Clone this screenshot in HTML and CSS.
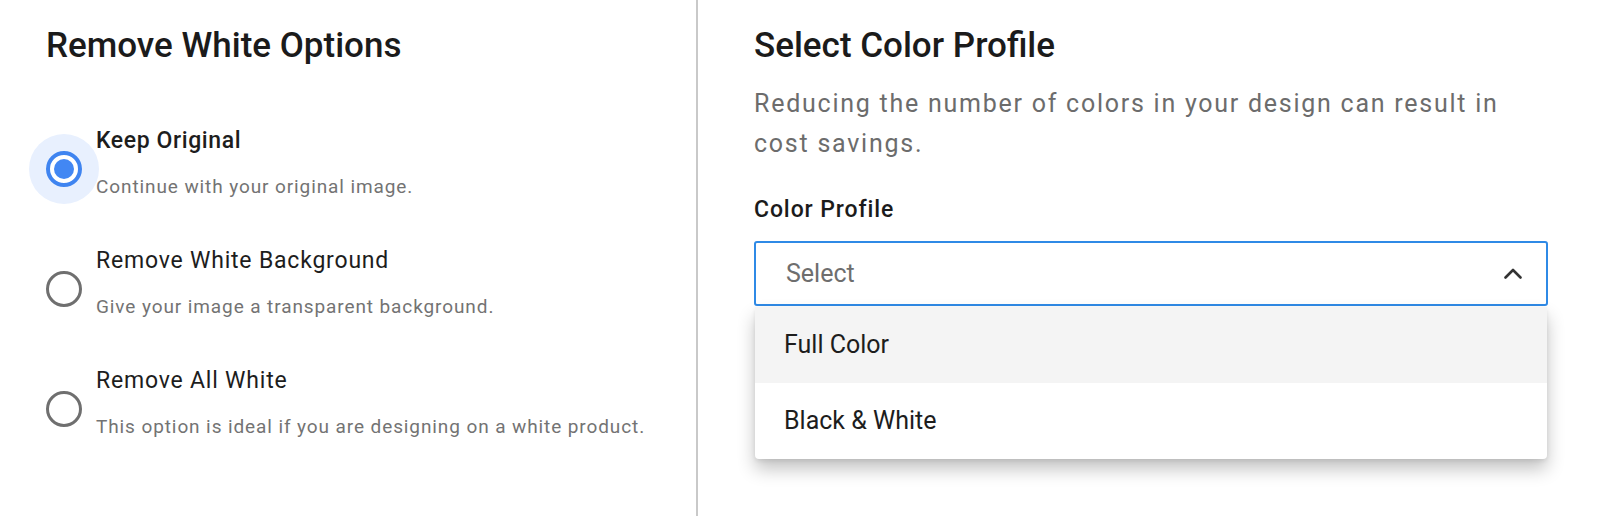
FILE: index.html
```html
<!DOCTYPE html>
<html lang="en">
<head>
<meta charset="utf-8">
<title>Options</title>
<link rel="stylesheet" href="styles.css">
</head>
<body>
<div class="page">
  <section class="panel panel-left">
    <h2 class="heading">Remove White Options</h2>
    <div class="options">
      <label class="option">
        <span class="radio radio-checked"><span class="radio-dot"></span></span>
        <span class="option-text">
          <span class="option-title option-title-active">Keep Original</span>
          <span class="option-desc">Continue with your original image.</span>
        </span>
      </label>
      <label class="option">
        <span class="radio"></span>
        <span class="option-text">
          <span class="option-title">Remove White Background</span>
          <span class="option-desc">Give your image a transparent background.</span>
        </span>
      </label>
      <label class="option">
        <span class="radio"></span>
        <span class="option-text">
          <span class="option-title">Remove All White</span>
          <span class="option-desc">This option is ideal if you are designing on a white product.</span>
        </span>
      </label>
    </div>
  </section>
  <section class="panel panel-right">
    <h2 class="heading">Select Color Profile</h2>
    <p class="lead">Reducing the number of colors in your design can result in cost savings.</p>
    <div class="field-label">Color Profile</div>
    <div class="select-wrap">
      <div class="select">
        <span class="select-placeholder">Select</span>
        <svg class="chevron" width="18" height="11" viewBox="0 0 18 11"><path d="M1.5 9.5 L9 2 L16.5 9.5" fill="none" stroke="#333" stroke-width="2.6" stroke-linecap="round" stroke-linejoin="round"/></svg>
      </div>
      <ul class="menu">
        <li class="menu-item menu-item-hover">Full Color</li>
        <li class="menu-item">Black &amp; White</li>
      </ul>
    </div>
  </section>
</div>
</body>
</html>
```

FILE: styles.css
```css
* { box-sizing: border-box; }
html, body { margin: 0; padding: 0; background: #fff; }
body {
  font-family: Roboto, "Liberation Sans", Arial, sans-serif;
  color: #1d1d1d;
}
.page {
  display: flex;
  height: 516px;
  overflow: hidden;
  background: #fff;
}
.panel-left {
  width: 698px;
  flex: none;
  border-right: 2px solid #c9c9c9;
  padding: 26px 0 0 46px;
}
.panel-right {
  flex: 1;
  padding: 26px 52px 0 56px;
}
.heading {
  margin: 0;
  font-size: 35px;
  line-height: 40px;
  font-weight: 500;
  color: #1b1b1b;
}
.options {
  display: flex;
  flex-direction: column;
  gap: 47px;
  margin-top: 61px;
}
.option {
  display: flex;
  align-items: flex-start;
  gap: 14px;
}
.radio {
  flex: none;
  width: 36px;
  height: 36px;
  margin-top: 24px;
  border: 3px solid #6f6f6f;
  border-radius: 50%;
  display: flex;
  align-items: center;
  justify-content: center;
}
.radio-checked {
  border: 4px solid #3f84f0;
  box-shadow: 0 0 0 17px #e8f0fe;
}
.radio-dot {
  width: 20px;
  height: 20px;
  border-radius: 50%;
  background: #4287f3;
}
.option-text {
  display: flex;
  flex-direction: column;
}
.option-title {
  font-size: 23px;
  line-height: 28px;
  letter-spacing: 0.8px;
  color: #1d1d1d;
}
.option-title-active {
  font-weight: 500;
  letter-spacing: 0.6px;
}
.option-desc {
  margin-top: 19px;
  font-size: 19px;
  line-height: 26px;
  letter-spacing: 0.9px;
  color: #737373;
}
.lead {
  margin: 18px 0 0;
  font-size: 25px;
  line-height: 40px;
  letter-spacing: 1.75px;
  color: #6c6c6c;
  max-width: 780px;
}
.field-label {
  margin-top: 32px;
  font-size: 23px;
  line-height: 28px;
  font-weight: 500;
  letter-spacing: 0.9px;
  color: #1b1b1b;
}
.select-wrap {
  position: relative;
  margin-top: 17px;
}
.select {
  height: 65px;
  border: 2px solid #2f8ae6;
  border-radius: 3px;
  display: flex;
  align-items: center;
  justify-content: space-between;
  padding: 0 24px 0 30px;
}
.select-placeholder {
  font-size: 25px;
  color: #6e6e6e;
}
.chevron { display: block; }
.menu {
  position: absolute;
  left: 1px;
  right: 1px;
  top: 66px;
  margin: 0;
  padding: 0;
  list-style: none;
  background: #fff;
  border-radius: 0 0 4px 4px;
  box-shadow: 0 10px 18px rgba(0, 0, 0, 0.24), 0 2px 4px rgba(0, 0, 0, 0.08);
  overflow: hidden;
}
.menu-item {
  height: 76px;
  line-height: 76px;
  padding-left: 29px;
  font-size: 25px;
  color: #1d1d1d;
}
.menu-item-hover {
  background: #f4f4f4;
}
```
